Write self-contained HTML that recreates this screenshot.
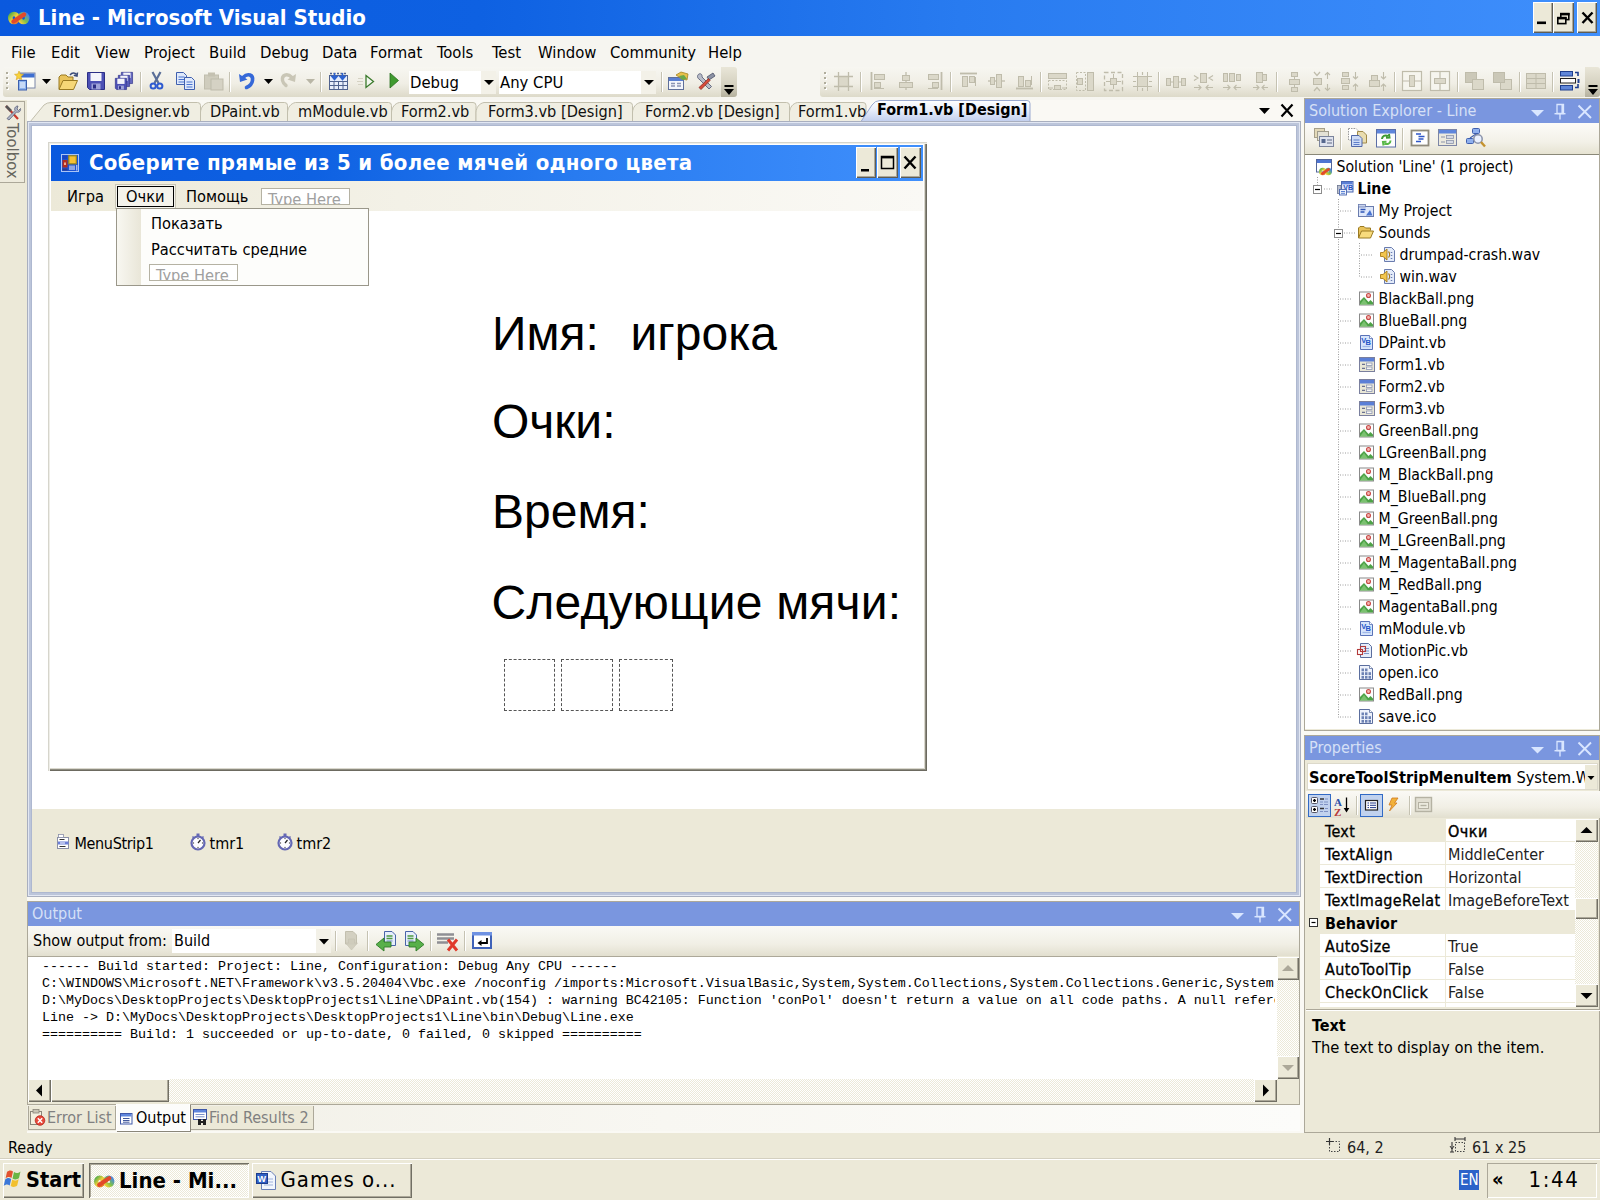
<!DOCTYPE html>
<html lang="en">
<head>
<meta charset="utf-8">
<title>Line - Microsoft Visual Studio</title>
<style>
html,body{margin:0;padding:0;}
body{width:1600px;height:1200px;overflow:hidden;background:#ece9d8;position:relative;
 font-family:"DejaVu Sans Condensed","DejaVu Sans","Liberation Sans",sans-serif;font-stretch:condensed;font-size:16px;color:#000;}
div,span{box-sizing:border-box;}
.a{position:absolute;white-space:nowrap;}
.t{position:absolute;white-space:nowrap;line-height:20px;height:20px;}
.b{font-weight:700;}
#ico{position:absolute;left:0;top:0;width:1600px;height:1200px;pointer-events:none;}
#titlebar{left:0;top:0;width:1600px;height:36px;background:linear-gradient(90deg,#0a59de 0%,#0e61e2 30%,#287bf0 60%,#3f8ffc 100%);}
#title{left:38px;top:3px;font-size:22px;font-weight:700;color:#fff;line-height:30px;}
.cbtn{position:absolute;background:#ece9d8;box-shadow:inset 1px 1px 0 #fff,inset -1px -1px 0 #5f5d53,inset -2px -2px 0 #aca899;}
#menubar{left:0;top:36px;width:1600px;height:30px;}
#menubar .t{top:6.5px;font-size:16.5px;}
.tb{position:absolute;height:30px;top:67px;border-radius:3px;background:linear-gradient(180deg,#f7f6f1 0%,#f0eee5 55%,#dddac9 100%);}
.sep{position:absolute;width:1px;background:#c5c2b2;box-shadow:1px 0 0 #fff;}
.combo{position:absolute;background:#fff;}
.cap{position:absolute;background:#7a96df;color:#d6e0f6;font-size:16px;line-height:22px;white-space:nowrap;}
.mono{font-family:"Liberation Mono",monospace;font-size:13.33px;font-stretch:normal;}
.raised{background:#ece9d8;box-shadow:inset 1px 1px 0 #fff,inset -1px -1px 0 #716f64,inset -2px -2px 0 #aca899;}
.sunken{box-shadow:inset 1px 1px 0 #aca899,inset -1px -1px 0 #fff;}
.dither{background-color:#ece9d8;background-image:linear-gradient(45deg,#fff 25%,transparent 25%,transparent 75%,#fff 75%),linear-gradient(45deg,#fff 25%,transparent 25%,transparent 75%,#fff 75%);background-size:2px 2px;background-position:0 0,1px 1px;}
</style>
</head>
<body>
<!-- TOP -->
<div style="position:absolute;left:27px;top:100px;width:1573px;height:1033px;background:#faf9f4;"></div>
<div style="position:absolute;left:0px;top:36px;width:1600px;height:64px;background:#f6f5f0;"></div>
<div class="a" id="titlebar"></div>
<div class="a" id="title">Line - Microsoft Visual Studio</div>
<div class="cbtn" style="position:absolute;left:1533px;top:2px;width:20px;height:31px;"></div>
<div class="cbtn" style="position:absolute;left:1553px;top:2px;width:21px;height:31px;"></div>
<div class="cbtn" style="position:absolute;left:1577px;top:2px;width:20px;height:31px;"></div>
<div class="a" id="menubar">
<span class="t" style="left:11px;top:6.5px;">File</span>
<span class="t" style="left:51px;top:6.5px;">Edit</span>
<span class="t" style="left:95px;top:6.5px;">View</span>
<span class="t" style="left:144px;top:6.5px;">Project</span>
<span class="t" style="left:209px;top:6.5px;">Build</span>
<span class="t" style="left:260px;top:6.5px;">Debug</span>
<span class="t" style="left:322px;top:6.5px;">Data</span>
<span class="t" style="left:370px;top:6.5px;">Format</span>
<span class="t" style="left:437px;top:6.5px;">Tools</span>
<span class="t" style="left:492px;top:6.5px;">Test</span>
<span class="t" style="left:538px;top:6.5px;">Window</span>
<span class="t" style="left:610px;top:6.5px;">Community</span>
<span class="t" style="left:708px;top:6.5px;">Help</span>
</div>
<div class="tb" style="left:3px;width:719px"></div>
<div style="position:absolute;left:721px;top:67px;width:16px;height:30px;background:linear-gradient(180deg,#e9e6d8 0%,#d4d0bf 60%,#b5b19e 100%);border-radius:0 3px 3px 0;"></div>
<div class="tb" style="left:820px;width:766px"></div>
<div style="position:absolute;left:1585px;top:67px;width:15px;height:30px;background:linear-gradient(180deg,#e9e6d8 0%,#d4d0bf 60%,#b5b19e 100%);border-radius:0 3px 3px 0;"></div>
<div style="position:absolute;left:6px;top:72px;width:2px;height:2px;background:#b0ad9c;box-shadow:1px 1px 0 #fff;"></div>
<div style="position:absolute;left:6px;top:77px;width:2px;height:2px;background:#b0ad9c;box-shadow:1px 1px 0 #fff;"></div>
<div style="position:absolute;left:6px;top:82px;width:2px;height:2px;background:#b0ad9c;box-shadow:1px 1px 0 #fff;"></div>
<div style="position:absolute;left:6px;top:87px;width:2px;height:2px;background:#b0ad9c;box-shadow:1px 1px 0 #fff;"></div>
<div style="position:absolute;left:824px;top:72px;width:2px;height:2px;background:#b0ad9c;box-shadow:1px 1px 0 #fff;"></div>
<div style="position:absolute;left:824px;top:77px;width:2px;height:2px;background:#b0ad9c;box-shadow:1px 1px 0 #fff;"></div>
<div style="position:absolute;left:824px;top:82px;width:2px;height:2px;background:#b0ad9c;box-shadow:1px 1px 0 #fff;"></div>
<div style="position:absolute;left:824px;top:87px;width:2px;height:2px;background:#b0ad9c;box-shadow:1px 1px 0 #fff;"></div>
<div class="sep" style="position:absolute;left:140px;top:72px;width:1px;height:20px;"></div>
<div class="sep" style="position:absolute;left:229px;top:72px;width:1px;height:20px;"></div>
<div class="sep" style="position:absolute;left:320px;top:72px;width:1px;height:20px;"></div>
<div class="sep" style="position:absolute;left:661px;top:72px;width:1px;height:20px;"></div>
<div class="combo" style="position:absolute;left:409px;top:71px;width:72px;height:23px;"></div>
<div style="position:absolute;left:481px;top:71px;width:15px;height:23px;background:#f3f1e8;"></div>
<span class="t" style="left:410px;top:73px;font-size:16.5px;">Debug</span>
<div class="combo" style="position:absolute;left:499px;top:71px;width:142px;height:23px;"></div>
<div style="position:absolute;left:641px;top:71px;width:15px;height:23px;background:#f3f1e8;"></div>
<span class="t" style="left:500px;top:73px;font-size:16.5px;">Any CPU</span>
<div class="sep" style="position:absolute;left:860px;top:72px;width:1px;height:20px;"></div>
<div class="sep" style="position:absolute;left:950px;top:72px;width:1px;height:20px;"></div>
<div class="sep" style="position:absolute;left:1040px;top:72px;width:1px;height:20px;"></div>
<div class="sep" style="position:absolute;left:1158px;top:72px;width:1px;height:20px;"></div>
<div class="sep" style="position:absolute;left:1276px;top:72px;width:1px;height:20px;"></div>
<div class="sep" style="position:absolute;left:1394px;top:72px;width:1px;height:20px;"></div>
<div class="sep" style="position:absolute;left:1457px;top:72px;width:1px;height:20px;"></div>
<div class="sep" style="position:absolute;left:1519px;top:72px;width:1px;height:20px;"></div>
<div class="sep" style="position:absolute;left:1552px;top:72px;width:1px;height:20px;"></div>
<!-- TABS -->
<div style="position:absolute;left:0px;top:101px;width:25px;height:82px;background:#eeebdd;border:1px solid #aca899;border-left:none;"></div>
<span class="a" style="left:21.5px;top:123px;transform-origin:0 0;transform:rotate(90deg);color:#66665e;font-size:16.6px;line-height:20px;">Toolbox</span>
<svg class="a" style="left:0;top:96px" width="1300" height="30"><path d="M30,26 L44,9 Q47,6.5 51,6.5 L197.5,6.5 Q200.5,6.5 200.5,9.5 L200.5,26 Z" fill="#f0eee2" stroke="#c2bfad" stroke-width="1"/><path d="M200.5,26 L200.5,16 C201.0,11.5 203.5,7.5 208.5,6.5 L284.5,6.5 Q287.5,6.5 287.5,9.5 L287.5,26 Z" fill="#f0eee2" stroke="#c2bfad" stroke-width="1"/><path d="M287.5,26 L287.5,16 C288.0,11.5 290.5,7.5 295.5,6.5 L388.5,6.5 Q391.5,6.5 391.5,9.5 L391.5,26 Z" fill="#f0eee2" stroke="#c2bfad" stroke-width="1"/><path d="M391.5,26 L391.5,16 C392.0,11.5 394.5,7.5 399.5,6.5 L473,6.5 Q476,6.5 476,9.5 L476,26 Z" fill="#f0eee2" stroke="#c2bfad" stroke-width="1"/><path d="M476,26 L476,16 C476.5,11.5 479,7.5 484,6.5 L629.5,6.5 Q632.5,6.5 632.5,9.5 L632.5,26 Z" fill="#f0eee2" stroke="#c2bfad" stroke-width="1"/><path d="M632.5,26 L632.5,16 C633.0,11.5 635.5,7.5 640.5,6.5 L786.5,6.5 Q789.5,6.5 789.5,9.5 L789.5,26 Z" fill="#f0eee2" stroke="#c2bfad" stroke-width="1"/><path d="M789.5,26 L789.5,16 C790.0,11.5 792.5,7.5 797.5,6.5 L863,6.5 Q866,6.5 866,9.5 L866,26 Z" fill="#f0eee2" stroke="#c2bfad" stroke-width="1"/><defs><linearGradient id="atg" x1="0" y1="0" x2="0" y2="1"><stop offset="0" stop-color="#ffffff"/><stop offset="0.45" stop-color="#e6ecfa"/><stop offset="1" stop-color="#bccaec"/></linearGradient></defs><path d="M860,27 L872,9 Q875,4.500 880,4.500 L1027,4.500 Q1030,4.500 1030,7.500 L1030,27 Z" fill="url(#atg)" stroke="#9aa9cf" stroke-width="1"/></svg>
<span class="t" style="left:53px;top:102px;font-size:16.2px;color:#111;">Form1.Designer.vb</span>
<span class="t" style="left:210px;top:102px;font-size:16.2px;color:#111;">DPaint.vb</span>
<span class="t" style="left:298px;top:102px;font-size:16.2px;color:#111;">mModule.vb</span>
<span class="t" style="left:401px;top:102px;font-size:16.2px;color:#111;">Form2.vb</span>
<span class="t" style="left:488px;top:102px;font-size:16.2px;color:#111;">Form3.vb [Design]</span>
<span class="t" style="left:645px;top:102px;font-size:16.2px;color:#111;">Form2.vb [Design]</span>
<span class="t" style="left:798px;top:102px;font-size:16.2px;color:#111;">Form1.vb</span>
<span class="t" style="left:877px;top:100px;font-weight:700;font-size:16px;">Form1.vb [Design]</span>
<!-- DOC -->
<div style="position:absolute;left:27px;top:121px;width:1274px;height:776px;background:#fff;border:1px solid #a9afbf;box-shadow:inset 0 0 0 1px #e2e7f3,inset 0 0 0 3px #bcc5da,inset 0 0 0 4px #aeb8d0;"></div>
<div style="position:absolute;left:32px;top:809px;width:1264px;height:83px;background:#ece9d8;"></div>
<div style="position:absolute;left:48px;top:142px;width:879px;height:629px;background:#fff;box-shadow:inset 1px 1px 0 #d6d5cc,inset 2px 2px 0 #efeee8,inset -1px -1px 0 #6c6a60,inset -2px -2px 0 #8e8c80,inset -3px -3px 0 #dad8ce;"></div>
<div style="position:absolute;left:51px;top:145px;width:872px;height:36px;background:linear-gradient(90deg,#0a59de 0%,#0e61e2 30%,#287bf0 60%,#3f8ffc 100%);"></div>
<span class="t" style="left:89px;top:149px;font-size:22px;font-weight:700;color:#fff;line-height:28px;height:28px;letter-spacing:0.3px;">Соберите прямые из 5 и более мячей одного цвета</span>
<div class="cbtn" style="position:absolute;left:856px;top:147px;width:20px;height:31px;"></div>
<div class="cbtn" style="position:absolute;left:877px;top:147px;width:21px;height:31px;"></div>
<div class="cbtn" style="position:absolute;left:900px;top:147px;width:21px;height:31px;"></div>
<div style="position:absolute;left:51px;top:181px;width:872px;height:30px;background:linear-gradient(90deg,#ece9d8 0%,#f3f1e7 40%,#faf9f5 100%);"></div>
<span class="t" style="left:67px;top:187px;font-size:16.3px;">Игра</span>
<div style="position:absolute;left:117px;top:186px;width:57px;height:21px;background:#f4f3ec;border:1px solid #000;box-shadow:0 0 0 1px #f4f3ec,0 0 0 2px #c9c6b6;"></div>
<span class="t" style="left:126px;top:187px;font-size:16.3px;">Очки</span>
<span class="t" style="left:186px;top:187px;font-size:16.3px;">Помощь</span>
<div style="position:absolute;left:261px;top:188px;width:89px;height:17px;background:#fff;border:1px solid #b5b2a3;overflow:hidden;"><span class="t" style="left:6px;top:1px;color:#a0a0a0;font-size:16.3px;">Type Here</span></div>
<div style="position:absolute;left:115.5px;top:208px;width:253.5px;height:78px;background:#fdfdfb;border:1px solid #9a978a;"></div>
<div style="position:absolute;left:117px;top:209px;width:24px;height:76px;background:linear-gradient(90deg,#f8f7f1,#e9e6d8);"></div>
<span class="t" style="left:151px;top:214px;font-size:16.3px;">Показать</span>
<span class="t" style="left:151px;top:240px;font-size:16.3px;">Рассчитать средние</span>
<div style="position:absolute;left:149px;top:264px;width:89px;height:17px;background:#fff;border:1px solid #b5b2a3;overflow:hidden;"><span class="t" style="left:6px;top:1px;color:#a0a0a0;font-size:16.3px;">Type Here</span></div>
<span class="t" style="left:492px;top:306px;font-family:'Liberation Sans',sans-serif;font-stretch:normal;font-size:48px;line-height:56px;height:56px;">Имя:</span>
<span class="t" style="left:630.5px;top:306px;font-family:'Liberation Sans',sans-serif;font-stretch:normal;font-size:48px;line-height:56px;height:56px;">игрока</span>
<span class="t" style="left:492px;top:394px;font-family:'Liberation Sans',sans-serif;font-stretch:normal;font-size:48px;line-height:56px;height:56px;">Очки:</span>
<span class="t" style="left:492px;top:484px;font-family:'Liberation Sans',sans-serif;font-stretch:normal;font-size:48px;line-height:56px;height:56px;">Время:</span>
<span class="t" style="left:491.5px;top:575px;font-family:'Liberation Sans',sans-serif;font-stretch:normal;font-size:48px;line-height:56px;height:56px;letter-spacing:0.2px;">Следующие мячи:</span>
<div style="position:absolute;left:504px;top:659px;width:51px;height:52px;border:1px dashed #555;"></div>
<div style="position:absolute;left:561px;top:659px;width:52px;height:52px;border:1px dashed #555;"></div>
<div style="position:absolute;left:619px;top:659px;width:54px;height:52px;border:1px dashed #555;"></div>
<span class="t" style="left:74.5px;top:833.5px;font-size:16px;letter-spacing:-0.35px;">MenuStrip1</span>
<span class="t" style="left:209.5px;top:833.5px;font-size:16px;">tmr1</span>
<span class="t" style="left:296.5px;top:833.5px;font-size:16px;">tmr2</span>
<!-- RIGHT -->
<div style="position:absolute;left:1304px;top:98px;width:296px;height:633px;border:1px solid #aca899;background:#ece9d8;"></div>
<div class="cap" style="position:absolute;left:1305px;top:99px;width:294px;height:24px;"><span class="a" style="left:4px;top:1px;">Solution Explorer - Line</span></div>
<div style="position:absolute;left:1305px;top:123px;width:294px;height:31px;background:linear-gradient(180deg,#fcfbf8 0%,#f3f1e8 60%,#e6e3d2 100%);"></div>
<div style="position:absolute;left:1305px;top:154px;width:294px;height:575px;background:#fff;border-top:1px solid #8a8878;"></div>
<div class="sep" style="position:absolute;left:1340px;top:128px;width:1px;height:22px;"></div>
<div class="sep" style="position:absolute;left:1402px;top:128px;width:1px;height:22px;"></div>
<span class="t" style="left:1336.5px;top:157.0px;font-size:15.7px;">Solution 'Line' (1 project)</span>
<span class="t" style="left:1357.5px;top:179.0px;font-weight:700;font-size:15.7px;">Line</span>
<span class="t" style="left:1378.5px;top:201.0px;font-size:15.7px;">My Project</span>
<span class="t" style="left:1378.5px;top:223.0px;font-size:15.7px;">Sounds</span>
<span class="t" style="left:1399.5px;top:245.0px;font-size:15.7px;">drumpad-crash.wav</span>
<span class="t" style="left:1399.5px;top:267.0px;font-size:15.7px;">win.wav</span>
<span class="t" style="left:1378.5px;top:289.0px;font-size:15.7px;">BlackBall.png</span>
<span class="t" style="left:1378.5px;top:311.0px;font-size:15.7px;">BlueBall.png</span>
<span class="t" style="left:1378.5px;top:333.0px;font-size:15.7px;">DPaint.vb</span>
<span class="t" style="left:1378.5px;top:355.0px;font-size:15.7px;">Form1.vb</span>
<span class="t" style="left:1378.5px;top:377.0px;font-size:15.7px;">Form2.vb</span>
<span class="t" style="left:1378.5px;top:399.0px;font-size:15.7px;">Form3.vb</span>
<span class="t" style="left:1378.5px;top:421.0px;font-size:15.7px;">GreenBall.png</span>
<span class="t" style="left:1378.5px;top:443.0px;font-size:15.7px;">LGreenBall.png</span>
<span class="t" style="left:1378.5px;top:465.0px;font-size:15.7px;">M_BlackBall.png</span>
<span class="t" style="left:1378.5px;top:487.0px;font-size:15.7px;">M_BlueBall.png</span>
<span class="t" style="left:1378.5px;top:509.0px;font-size:15.7px;">M_GreenBall.png</span>
<span class="t" style="left:1378.5px;top:531.0px;font-size:15.7px;">M_LGreenBall.png</span>
<span class="t" style="left:1378.5px;top:553.0px;font-size:15.7px;">M_MagentaBall.png</span>
<span class="t" style="left:1378.5px;top:575.0px;font-size:15.7px;">M_RedBall.png</span>
<span class="t" style="left:1378.5px;top:597.0px;font-size:15.7px;">MagentaBall.png</span>
<span class="t" style="left:1378.5px;top:619.0px;font-size:15.7px;">mModule.vb</span>
<span class="t" style="left:1378.5px;top:641.0px;font-size:15.7px;">MotionPic.vb</span>
<span class="t" style="left:1378.5px;top:663.0px;font-size:15.7px;">open.ico</span>
<span class="t" style="left:1378.5px;top:685.0px;font-size:15.7px;">RedBall.png</span>
<span class="t" style="left:1378.5px;top:707.0px;font-size:15.7px;">save.ico</span>
<div style="position:absolute;left:1304px;top:735px;width:296px;height:398px;border:1px solid #aca899;background:#ece9d8;"></div>
<div class="cap" style="position:absolute;left:1305px;top:736px;width:294px;height:24px;"><span class="a" style="left:4px;top:1px;">Properties</span></div>
<div style="position:absolute;left:1307px;top:763px;width:291px;height:27px;background:#fff;border:1px solid #dcd9cb;"></div>
<div style="position:absolute;left:1585px;top:765px;width:12px;height:24px;background:#ece9d8;"></div>
<div style="position:absolute;left:1309px;top:765px;width:276px;height:24px;overflow:hidden;"><span class="t" style="left:0px;top:3px;font-size:16.3px;"><b>ScoreToolStripMenuItem</b> System.Windows.Forms</span></div>
<div style="position:absolute;left:1306px;top:791px;width:294px;height:27px;background:linear-gradient(180deg,#faf9f5 0%,#f1efe5 60%,#e2dfcf 100%);"></div>
<div style="position:absolute;left:1308px;top:794px;width:23px;height:23px;background:#c1d2ee;border:1px solid #316ac5;"></div>
<div style="position:absolute;left:1360px;top:794px;width:23px;height:23px;background:#c1d2ee;border:1px solid #316ac5;"></div>
<div class="sep" style="position:absolute;left:1356px;top:796px;width:1px;height:19px;"></div>
<div class="sep" style="position:absolute;left:1409px;top:796px;width:1px;height:19px;"></div>
<div style="position:absolute;left:1308px;top:819px;width:267px;height:188px;background:#ece9d8;"></div>
<div style="position:absolute;left:1320px;top:1003px;width:125px;height:4px;background:#fff;"></div>
<div style="position:absolute;left:1446px;top:1003px;width:129px;height:4px;background:#fff;"></div>
<div style="position:absolute;left:1446px;top:819px;width:129px;height:22px;background:#fff;"></div>
<div style="position:absolute;left:1320px;top:819px;width:126px;height:22px;overflow:hidden;"><span class="t" style="left:5px;top:3px;font-size:16px;letter-spacing:0.35px;-webkit-text-stroke:0.3px #000;">Text</span></div>
<div style="position:absolute;left:1446px;top:819px;width:129px;height:22px;overflow:hidden;"><span class="t" style="left:2px;top:2.5px;font-size:16px;color:#222;color:#000;letter-spacing:0.5px;-webkit-text-stroke:0.4px #000;">Очки</span></div>
<div style="position:absolute;left:1320px;top:842px;width:125px;height:22px;background:#fff;"></div>
<div style="position:absolute;left:1446px;top:842px;width:129px;height:22px;background:#fff;"></div>
<div style="position:absolute;left:1320px;top:842px;width:126px;height:22px;overflow:hidden;"><span class="t" style="left:5px;top:3px;font-size:16px;letter-spacing:0.35px;-webkit-text-stroke:0.3px #000;">TextAlign</span></div>
<div style="position:absolute;left:1446px;top:842px;width:129px;height:22px;overflow:hidden;"><span class="t" style="left:2px;top:2.5px;font-size:16px;color:#222;">MiddleCenter</span></div>
<div style="position:absolute;left:1320px;top:865px;width:125px;height:22px;background:#fff;"></div>
<div style="position:absolute;left:1446px;top:865px;width:129px;height:22px;background:#fff;"></div>
<div style="position:absolute;left:1320px;top:865px;width:126px;height:22px;overflow:hidden;"><span class="t" style="left:5px;top:3px;font-size:16px;letter-spacing:0.35px;-webkit-text-stroke:0.3px #000;">TextDirection</span></div>
<div style="position:absolute;left:1446px;top:865px;width:129px;height:22px;overflow:hidden;"><span class="t" style="left:2px;top:2.5px;font-size:16px;color:#222;">Horizontal</span></div>
<div style="position:absolute;left:1320px;top:888px;width:125px;height:22px;background:#fff;"></div>
<div style="position:absolute;left:1446px;top:888px;width:129px;height:22px;background:#fff;"></div>
<div style="position:absolute;left:1320px;top:888px;width:126px;height:22px;overflow:hidden;"><span class="t" style="left:5px;top:3px;font-size:16px;letter-spacing:0.35px;-webkit-text-stroke:0.3px #000;">TextImageRelat</span></div>
<div style="position:absolute;left:1446px;top:888px;width:129px;height:22px;overflow:hidden;"><span class="t" style="left:2px;top:2.5px;font-size:16px;color:#222;">ImageBeforeText</span></div>
<span class="t" style="left:1325px;top:914px;font-weight:700;font-size:16px;">Behavior</span>
<div style="position:absolute;left:1320px;top:934px;width:125px;height:22px;background:#fff;"></div>
<div style="position:absolute;left:1446px;top:934px;width:129px;height:22px;background:#fff;"></div>
<div style="position:absolute;left:1320px;top:934px;width:126px;height:22px;overflow:hidden;"><span class="t" style="left:5px;top:3px;font-size:16px;letter-spacing:0.35px;-webkit-text-stroke:0.3px #000;">AutoSize</span></div>
<div style="position:absolute;left:1446px;top:934px;width:129px;height:22px;overflow:hidden;"><span class="t" style="left:2px;top:2.5px;font-size:16px;color:#222;">True</span></div>
<div style="position:absolute;left:1320px;top:957px;width:125px;height:22px;background:#fff;"></div>
<div style="position:absolute;left:1446px;top:957px;width:129px;height:22px;background:#fff;"></div>
<div style="position:absolute;left:1320px;top:957px;width:126px;height:22px;overflow:hidden;"><span class="t" style="left:5px;top:3px;font-size:16px;letter-spacing:0.35px;-webkit-text-stroke:0.3px #000;">AutoToolTip</span></div>
<div style="position:absolute;left:1446px;top:957px;width:129px;height:22px;overflow:hidden;"><span class="t" style="left:2px;top:2.5px;font-size:16px;color:#222;">False</span></div>
<div style="position:absolute;left:1320px;top:980px;width:125px;height:22px;background:#fff;"></div>
<div style="position:absolute;left:1446px;top:980px;width:129px;height:22px;background:#fff;"></div>
<div style="position:absolute;left:1320px;top:980px;width:126px;height:22px;overflow:hidden;"><span class="t" style="left:5px;top:3px;font-size:16px;letter-spacing:0.35px;-webkit-text-stroke:0.3px #000;">CheckOnClick</span></div>
<div style="position:absolute;left:1446px;top:980px;width:129px;height:22px;overflow:hidden;"><span class="t" style="left:2px;top:2.5px;font-size:16px;color:#222;">False</span></div>
<div class="dither" style="position:absolute;left:1575px;top:819px;width:23px;height:188px;"></div>
<div class="raised" style="position:absolute;left:1575px;top:819px;width:23px;height:23px;"></div>
<div class="raised" style="position:absolute;left:1575px;top:984px;width:23px;height:23px;"></div>
<div class="raised" style="position:absolute;left:1575px;top:898px;width:23px;height:21px;"></div>
<div style="position:absolute;left:1306px;top:1009px;width:294px;height:1px;background:#aca899;box-shadow:0 1px 0 #fff;"></div>
<span class="t" style="left:1312px;top:1016px;font-weight:700;font-size:16px;">Text</span>
<span class="t" style="left:1312px;top:1038px;font-size:16.4px;">The text to display on the item.</span>
<!-- BOTTOM -->
<div style="position:absolute;left:27px;top:901px;width:1273px;height:204px;border:1px solid #aca899;background:#ece9d8;"></div>
<div class="cap" style="position:absolute;left:28px;top:902px;width:1271px;height:24px;"><span class="a" style="left:4px;top:1px;">Output</span></div>
<div style="position:absolute;left:28px;top:926px;width:1271px;height:30px;background:linear-gradient(180deg,#faf9f5 0%,#f1efe5 60%,#e2dfcf 100%);"></div>
<span class="t" style="left:33px;top:931px;font-size:16px;">Show output from:</span>
<div style="position:absolute;left:172px;top:929px;width:144px;height:24px;background:#fff;"></div>
<div style="position:absolute;left:316px;top:929px;width:15px;height:24px;background:#f3f1e8;"></div>
<span class="t" style="left:174px;top:931px;font-size:16px;">Build</span>
<div class="sep" style="position:absolute;left:335px;top:931px;width:1px;height:20px;"></div>
<div class="sep" style="position:absolute;left:367px;top:931px;width:1px;height:20px;"></div>
<div class="sep" style="position:absolute;left:430px;top:931px;width:1px;height:20px;"></div>
<div class="sep" style="position:absolute;left:464px;top:931px;width:1px;height:20px;"></div>
<div style="position:absolute;left:28px;top:956px;width:1249px;height:123px;background:#fff;border-top:1px solid #aca899;overflow:hidden;"></div>
<div style="position:absolute;left:28px;top:957px;width:1247px;height:122px;overflow:hidden;"><span class="t mono" style="left:14px;top:1px;line-height:17px;height:17px;">------ Build started: Project: Line, Configuration: Debug Any CPU ------</span>
<span class="t mono" style="left:14px;top:18px;line-height:17px;height:17px;">C:\WINDOWS\Microsoft.NET\Framework\v3.5.20404\Vbc.exe /noconfig /imports:Microsoft.VisualBasic,System,System.Collections,System.Collections.Generic,System.Data,System.Diagnostics</span>
<span class="t mono" style="left:14px;top:35px;line-height:17px;height:17px;">D:\MyDocs\DesktopProjects\DesktopProjects1\Line\DPaint.vb(154) : warning BC42105: Function 'conPol' doesn't return a value on all code paths. A null reference exception could occur</span>
<span class="t mono" style="left:14px;top:52px;line-height:17px;height:17px;">Line -&gt; D:\MyDocs\DesktopProjects\DesktopProjects1\Line\bin\Debug\Line.exe</span>
<span class="t mono" style="left:14px;top:69px;line-height:17px;height:17px;">========== Build: 1 succeeded or up-to-date, 0 failed, 0 skipped ==========</span>
</div>
<div class="dither" style="position:absolute;left:1277px;top:957px;width:22px;height:122px;"></div>
<div class="raised" style="position:absolute;left:1277px;top:957px;width:22px;height:23px;"></div>
<div class="raised" style="position:absolute;left:1277px;top:1056px;width:22px;height:23px;"></div>
<div class="dither" style="position:absolute;left:28px;top:1079px;width:1249px;height:23px;"></div>
<div class="raised" style="position:absolute;left:28px;top:1079px;width:23px;height:23px;"></div>
<div class="raised" style="position:absolute;left:51px;top:1079px;width:118px;height:23px;"></div>
<div class="raised" style="position:absolute;left:1254px;top:1079px;width:23px;height:23px;"></div>
<div style="position:absolute;left:1277px;top:1079px;width:22px;height:23px;background:#ece9d8;"></div>
<div style="position:absolute;left:27px;top:1105px;width:1273px;height:26px;background:linear-gradient(90deg,#f0eee4 0%,#f8f7f2 50%,#fcfcfa 100%);"></div>
<div style="position:absolute;left:28px;top:1106px;width:88px;height:24px;background:#ece9d8;border:1px solid #aca899;border-top:none;"></div>
<div style="position:absolute;left:190px;top:1106px;width:124px;height:24px;background:#ece9d8;border:1px solid #aca899;border-top:none;"></div>
<div style="position:absolute;left:116px;top:1104px;width:74px;height:27px;background:#fcfcfa;border:1px solid #fff;border-top:none;box-shadow:1px 1px 0 #8a867a;"></div>
<span class="t" style="left:47px;top:1108px;font-size:16px;color:#808080;">Error List</span>
<span class="t" style="left:136px;top:1108px;font-size:16px;">Output</span>
<span class="t" style="left:209px;top:1108px;font-size:16px;color:#808080;">Find Results 2</span>
<span class="t" style="left:8px;top:1138px;font-size:16px;">Ready</span>
<span class="t" style="left:1347px;top:1138px;font-size:16px;color:#222;">64, 2</span>
<span class="t" style="left:1472px;top:1138px;font-size:16px;color:#222;">61 x 25</span>
<div style="position:absolute;left:0px;top:1159px;width:1600px;height:41px;background:#ece9d8;border-top:1px solid #fff;box-shadow:0 -1px 0 #d4d0c0;"></div>
<div class="raised" style="position:absolute;left:3px;top:1163px;width:81px;height:35px;"></div>
<span class="t" style="left:26px;top:1165px;font-size:21.5px;font-weight:700;line-height:30px;height:30px;">Start</span>
<div class="dither" style="position:absolute;left:89px;top:1163px;width:160px;height:35px;box-shadow:inset 1px 1px 0 #716f64,inset -1px -1px 0 #fff,inset 2px 2px 0 #aca899;"></div>
<span class="t" style="left:119px;top:1166px;font-size:22px;font-weight:700;line-height:30px;height:30px;">Line - Mi...</span>
<div class="raised" style="position:absolute;left:252px;top:1163px;width:160px;height:35px;"></div>
<span class="t" style="left:280.5px;top:1165px;font-size:22px;letter-spacing:1px;line-height:30px;height:30px;">Games o...</span>
<div style="position:absolute;left:1459px;top:1170px;width:20px;height:20px;background:#2c62c9;"></div>
<span class="t" style="left:1460px;top:1170px;font-size:15px;color:#fff;">EN</span>
<div class="sunken" style="position:absolute;left:1487px;top:1163px;width:110px;height:35px;"></div>
<span class="t" style="left:1492px;top:1165px;font-size:20px;font-weight:700;line-height:28px;height:28px;">«</span>
<span class="t" style="left:1528.5px;top:1165px;font-size:22px;letter-spacing:1.6px;line-height:30px;height:30px;">1:44</span>
<!-- ICONS -->
<svg id="ico" viewBox="0 0 1600 1200">
<defs><linearGradient id="vl1" x1="0" y1="0" x2="1" y2="1"><stop offset="0" stop-color="#5fb04a"/><stop offset="0.5" stop-color="#f0d03a"/><stop offset="1" stop-color="#e8782a"/></linearGradient><linearGradient id="vl2" x1="1" y1="0" x2="0" y2="1"><stop offset="0" stop-color="#4a86e0"/><stop offset="0.55" stop-color="#7cc04a"/><stop offset="1" stop-color="#f0d03a"/></linearGradient></defs>
<g transform="translate(8,8) scale(1.0)"><ellipse cx="6" cy="10" rx="3.700" ry="4" fill="none" stroke="url(#vl1)" stroke-width="4.600"/><ellipse cx="15.500" cy="10" rx="3.700" ry="4" fill="none" stroke="url(#vl2)" stroke-width="4.600"/><path d="M5.500,13.500 L16,6.500" stroke="#e2492a" stroke-width="4.400" stroke-linecap="round"/></g>
<rect x="1537" y="21.500" width="9" height="2.600" fill="#000"/><g fill="none" stroke="#000" stroke-width="1.600"><rect x="1560.800" y="13.600" width="8" height="6"/><path d="M1560,14.200 h9.600" stroke-width="2.400"/><rect x="1557.800" y="17.600" width="8" height="6" fill="#ece9d8"/><path d="M1557,18.200 h9.600" stroke-width="2.400"/></g><path d="M1582.500,12.500 l10,10.500 M1592.500,12.500 l-10,10.500" stroke="#000" stroke-width="2.400" fill="none"/>
<g transform="translate(15,71)" ><rect x="5" y="2" width="15" height="15" fill="#fdfdf8" stroke="#7b86a8"/><rect x="5.500" y="2.500" width="14" height="4" fill="#3f6fd0"/><rect x="7" y="8" width="5" height="8" fill="#d9dff0"/><path d="M4,0 L5.200,3 L8.500,3.300 L6,5.500 L6.800,8.800 L4,7 L1.200,8.800 L2,5.500 L-0.500,3.300 L2.800,3 Z" fill="#f7d23a" stroke="#d8a520" stroke-width="0.600"/><rect x="3.500" y="9.500" width="8" height="9.500" fill="#8eb4ee" stroke="#3b5fae"/><path d="M5,12 h5 M5,14 h5 M5,16 h5" stroke="#fff" stroke-width="1"/></g>
<path d="M42,79 h9 l-4.5,5 Z" fill="#000"/>
<g transform="translate(58,72)" ><path d="M1,17 L1,5 L3,3 L8,3 L10,5 L15,5 L15,8" fill="#e9c35a" stroke="#9a7a22"/><path d="M1,17.500 L5,8.500 L19.500,8.500 L15.500,17.500 Z" fill="#f6d777" stroke="#9a7a22"/><path d="M12,3 C14,0.500 17,0.500 18.500,2.500 M19.500,0.500 L19,4 L15.800,3.200" fill="none" stroke="#3a4a78" stroke-width="1.500"/></g>
<g transform="translate(87,72)" ><path d="M0.500,0.500 H17.500 V17.500 H2.500 L0.500,15.500 Z" fill="#4c50b4" stroke="#2c2f86"/><rect x="3.500" y="1" width="11" height="8" fill="#f4f4fa"/><rect x="4.500" y="11.500" width="9" height="6" fill="#9fa3d8"/><rect x="6" y="12.500" width="3" height="4" fill="#2c2f86"/></g>
<g transform="translate(115,72)" ><g transform="translate(6,0) scale(0.66)"><path d="M0.500,0.500 H17.500 V17.500 H2.500 L0.500,15.500 Z" fill="#6669c0" stroke="#2c2f86"/><rect x="3.500" y="1" width="11" height="8" fill="#f4f4fa"/><rect x="4.500" y="11.500" width="9" height="6" fill="#9fa3d8"/><rect x="6" y="12.500" width="3" height="4" fill="#2c2f86"/></g><g transform="translate(3,3) scale(0.66)"><path d="M0.500,0.500 H17.500 V17.500 H2.500 L0.500,15.500 Z" fill="#585cba" stroke="#2c2f86"/><rect x="3.500" y="1" width="11" height="8" fill="#f4f4fa"/><rect x="4.500" y="11.500" width="9" height="6" fill="#9fa3d8"/><rect x="6" y="12.500" width="3" height="4" fill="#2c2f86"/></g><g transform="translate(0,6) scale(0.66)"><path d="M0.500,0.500 H17.500 V17.500 H2.500 L0.500,15.500 Z" fill="#4c50b4" stroke="#2c2f86"/><rect x="3.500" y="1" width="11" height="8" fill="#f4f4fa"/><rect x="4.500" y="11.500" width="9" height="6" fill="#9fa3d8"/><rect x="6" y="12.500" width="3" height="4" fill="#2c2f86"/></g></g>
<g transform="translate(150,72)" ><path d="M2.500,0 L8.500,11 M10.500,0 L4.500,11" stroke="#5a6e98" stroke-width="2.200" fill="none"/><circle cx="3.200" cy="14" r="2.600" fill="none" stroke="#2f5bd0" stroke-width="2"/><circle cx="9.800" cy="14" r="2.600" fill="none" stroke="#2f5bd0" stroke-width="2"/></g>
<g transform="translate(176,72)" ><path d="M0.500,0.500 H7.5 L10.5,3.500 V12.5 H0.500 Z" fill="#dfe9fb" stroke="#3f5fae"/><path d="M2.500,5 h6 M2.500,7.500 h6 M2.500,10 h6" stroke="#4a74d0" stroke-width="1.200"/><g transform="translate(8,5)"><path d="M0.500,0.500 H7.5 L10.5,3.500 V12.5 H0.500 Z" fill="#dfe9fb" stroke="#3f5fae"/><path d="M2.500,5 h6 M2.500,7.500 h6 M2.500,10 h6" stroke="#4a74d0" stroke-width="1.200"/></g></g>
<g transform="translate(204,72)" ><rect x="0.500" y="3" width="14" height="14" fill="#cfccbd" stroke="#c0bdad"/><rect x="4" y="0.500" width="7" height="4" fill="#c4c1b1"/><rect x="7" y="7" width="12" height="11" fill="#d5d2c4" stroke="#bebbab"/></g>
<g transform="translate(239,72)" ><path d="M4,5.500 C9,0.500 14.500,3 13.500,8.500 C13,12 10,14.500 7.500,15.500" fill="none" stroke="#3568d8" stroke-width="3.600" stroke-linecap="round"/><path d="M0,2 L1,10 L8.500,7.500 Z" fill="#3568d8"/></g>
<path d="M264,79 h9 l-4.5,5 Z" fill="#000"/>
<g transform="translate(280,72)" ><path d="M12,5.500 C7,0.500 1.500,3 2.500,8.500 C3,11 4.500,12.500 6,13.500" fill="none" stroke="#c9c6b6" stroke-width="3.400" stroke-linecap="round"/><path d="M16,2 L15,10 L7.500,7.500 Z" fill="#c9c6b6"/></g>
<path d="M306,79 h9 l-4.5,5 Z" fill="#b9b6a6"/>
<g transform="translate(329,72)" ><rect x="0.500" y="3.500" width="18" height="14" fill="#e8eefb" stroke="#50628e"/><path d="M1,9.500 h17 M1,13.500 h17 M5,9 v8 M9.500,9 v8 M14,9 v8" stroke="#50628e" stroke-width="1"/><path d="M1,1.500 h17" stroke="#50628e" stroke-width="1.500" stroke-dasharray="2,1.500"/><path d="M5.500,1 v5 M3,4.500 l2.500,3 l2.500,-3 Z M13.500,1 v5 M11,4.500 l2.500,3 l2.500,-3 Z" stroke="#2d62cf" stroke-width="1.600" fill="#2d62cf"/></g>
<g transform="translate(357,75)" ><path d="M9,0.500 L16.500,6.500 L9,12.500 Z" fill="#f2f7ee" stroke="#3a7a2c" stroke-width="1.300"/><path d="M1,3.500 h5 M0,6.500 h6 M1,9.500 h5" stroke="#d5d2c3" stroke-width="1.200"/></g>
<g transform="translate(390,73)" ><path d="M0,0 L8.500,7.500 L0,15 Z" fill="#3f9a2f" stroke="#2a6e20" stroke-width="0.800"/></g>
<path d="M484,80 h10 l-5.0,5 Z" fill="#000"/>
<path d="M644,80 h10 l-5.0,5 Z" fill="#000"/>
<g transform="translate(668,72)" ><rect x="0.500" y="5.500" width="15" height="12" fill="#f4f6fc" stroke="#5f6f9a"/><rect x="1" y="6" width="14" height="3" fill="#5a7fd2"/><path d="M3,11.500 h4 M3,14 h4 M9,11.500 h4 M9,14 h4" stroke="#8a94b4" stroke-width="1.400"/><path d="M8,3 L13,0 L20,2 L19,8 L14,7 Z" fill="#e8c04a" stroke="#a68420" stroke-width="0.800"/><path d="M11,4 L16,3 L19,7 L14,8 Z" fill="#6aa84a"/></g>
<g transform="translate(696,72)" ><path d="M3,2 C1,3 1,6 3,7 L13,17 L15.500,14.500 L6,5 C6.500,3 5,1 3,2 Z" fill="#b8bcc8" stroke="#5a6078" stroke-width="0.900"/><path d="M17,1 L11,5 L13,8 L19,4 Z" fill="#8c92a4" stroke="#4a5068" stroke-width="0.800"/><path d="M12.500,6.500 L3,15.500 L5,17.500 L14,8.500 Z" fill="#d84a3a" stroke="#8a2a20" stroke-width="0.800"/></g>
<rect x="724.5" y="85" width="9" height="2" fill="#000"/><path d="M724,89 h10 l-5.0,6 Z" fill="#000"/>
<rect x="1588.5" y="85" width="9" height="2" fill="#000"/><path d="M1588,89 h10 l-5.0,6 Z" fill="#000"/>
<g transform="translate(834,72)" ><rect x="4.5" y="4.5" width="10" height="10" fill="#dbd8c9" stroke="#bfbcab"/><path d="M0,4.500 h19 M0,14.500 h19 M4.500,0 v19 M14.500,0 v19" stroke="#bfbcab" stroke-width="1.3" fill="none"/></g>
<g transform="translate(870,72)" ><path d="M1.500,0 v18" stroke="#bfbcab" stroke-width="1.8" fill="none"/><rect x="4.5" y="2.5" width="10" height="5" fill="#dbd8c9" stroke="#bfbcab"/><rect x="4.5" y="10.5" width="6" height="5" fill="#dbd8c9" stroke="#bfbcab"/><path d="M4,16.500 h10" stroke="#bfbcab" stroke-width="1" fill="none"/></g>
<g transform="translate(899,72)" ><path d="M7,0 v18" stroke="#bfbcab" stroke-width="1.3" fill="none"/><rect x="3.5" y="3.5" width="7" height="5" fill="#dbd8c9" stroke="#bfbcab"/><rect x="0.5" y="10.5" width="13" height="5" fill="#dbd8c9" stroke="#bfbcab"/></g>
<g transform="translate(926,72)" ><path d="M15.500,0 v18" stroke="#bfbcab" stroke-width="1.8" fill="none"/><rect x="2.5" y="2.5" width="10" height="5" fill="#dbd8c9" stroke="#bfbcab"/><rect x="6.5" y="10.5" width="6" height="5" fill="#dbd8c9" stroke="#bfbcab"/><path d="M2,16.500 h10" stroke="#bfbcab" stroke-width="1" fill="none"/></g>
<g transform="translate(960,72)" ><path d="M0,1.500 h17" stroke="#bfbcab" stroke-width="1.8" fill="none"/><rect x="2.5" y="4.5" width="5" height="10" fill="#dbd8c9" stroke="#bfbcab"/><rect x="9.5" y="4.5" width="5" height="6" fill="#dbd8c9" stroke="#bfbcab"/><path d="M15.500,5 v9" stroke="#bfbcab" stroke-width="1" fill="none"/></g>
<g transform="translate(988,72)" ><path d="M0,9 h17" stroke="#bfbcab" stroke-width="1.3" fill="none"/><rect x="2.5" y="5.5" width="4" height="7" fill="#dbd8c9" stroke="#bfbcab"/><rect x="8.5" y="2.5" width="5" height="13" fill="#dbd8c9" stroke="#bfbcab"/></g>
<g transform="translate(1016,72)" ><path d="M0,16.500 h17" stroke="#bfbcab" stroke-width="1.8" fill="none"/><rect x="2.5" y="4.5" width="5" height="10" fill="#dbd8c9" stroke="#bfbcab"/><rect x="9.5" y="8.5" width="5" height="6" fill="#dbd8c9" stroke="#bfbcab"/><path d="M15.500,4 v9" stroke="#bfbcab" stroke-width="1" fill="none"/></g>
<g transform="translate(1048,72)" ><rect x="0.5" y="1.5" width="18" height="5" fill="#dbd8c9" stroke="#bfbcab"/><rect x="0.500" y="8.500" width="18" height="9" fill="none" stroke="#bfbcab" stroke-dasharray="2,1.500"/><rect x="6.5" y="13.5" width="6" height="4" fill="#dbd8c9" stroke="#bfbcab"/><path d="M0,16 h5 M14,16 h5" stroke="#bfbcab" stroke-width="1.2" fill="none"/></g>
<g transform="translate(1076,72)" ><rect x="11.5" y="0.5" width="6" height="18" fill="#dbd8c9" stroke="#bfbcab"/><rect x="0.500" y="0.500" width="9" height="18" fill="none" stroke="#bfbcab" stroke-dasharray="2,1.500"/><rect x="1.5" y="6.5" width="5" height="6" fill="#dbd8c9" stroke="#bfbcab"/></g>
<g transform="translate(1104,72)" ><rect x="0.500" y="0.500" width="18" height="18" fill="none" stroke="#bfbcab" stroke-width="1.300" stroke-dasharray="4,2.500"/><rect x="6.5" y="6.5" width="6" height="6" fill="#dbd8c9" stroke="#bfbcab"/><path d="M9.500,2 v4 M9.500,13 v4 M2,9.500 h4 M13,9.500 h4" stroke="#bfbcab" stroke-width="1" fill="none"/></g>
<g transform="translate(1133,72)" ><rect x="4.5" y="4.5" width="10" height="10" fill="#dbd8c9" stroke="#bfbcab"/><path d="M0,4.500 h19 M0,14.500 h19 M4.500,0 v19 M14.500,0 v19" stroke="#bfbcab" stroke-width="1" fill="none"/><path d="M9.500,0 v3 M9.500,16 v3 M0,9.500 h3 M16,9.500 h3" stroke="#bfbcab" stroke-width="1.2" fill="none"/></g>
<g transform="translate(1166,76)" ><rect x="0.5" y="2.5" width="4" height="7" fill="#dbd8c9" stroke="#bfbcab"/><rect x="7.5" y="0.5" width="5" height="11" fill="#dbd8c9" stroke="#bfbcab"/><rect x="15.5" y="2.5" width="4" height="7" fill="#dbd8c9" stroke="#bfbcab"/><path d="M4.500,6 h3 M12.500,6 h3" stroke="#bfbcab" stroke-width="1" fill="none"/></g>
<g transform="translate(1194,72)" ><rect x="6.5" y="1.5" width="6" height="9" fill="#dbd8c9" stroke="#bfbcab"/><path d="M0,3.500 l4,2.500 l-4,2.500 M19,3.500 l-4,2.500 l4,2.500" stroke="#bfbcab" stroke-width="1.2" fill="none"/><path d="M0,15.500 h7 M4.500,13 l2.500,2.500 l-2.500,2.500 M19,15.500 h-7 M14.500,13 l-2.500,2.500 l2.500,2.500" stroke="#bfbcab" stroke-width="1.1" fill="none"/></g>
<g transform="translate(1223,72)" ><rect x="0.5" y="1.5" width="4" height="8" fill="#dbd8c9" stroke="#bfbcab"/><rect x="6.5" y="1.5" width="5" height="8" fill="#dbd8c9" stroke="#bfbcab"/><rect x="13.5" y="2.5" width="4" height="6" fill="#dbd8c9" stroke="#bfbcab"/><path d="M0,15.500 h7 M4.500,13 l2.500,2.500 l-2.500,2.500 M18,15.500 h-7 M13.500,13 l-2.500,2.500 l2.500,2.500" stroke="#bfbcab" stroke-width="1.1" fill="none"/></g>
<g transform="translate(1253,72)" ><rect x="3.5" y="0.5" width="6" height="10" fill="#dbd8c9" stroke="#bfbcab"/><rect x="9.5" y="2.5" width="4" height="6" fill="#dbd8c9" stroke="#bfbcab"/><path d="M0,15.500 h6 M3.500,13 l2.500,2.500 l-2.500,2.500 M15,15.500 h-6 M11.500,13 l-2.500,2.500 l2.500,2.500" stroke="#bfbcab" stroke-width="1.1" fill="none"/></g>
<g transform="translate(1289,72)" ><rect x="2.5" y="0.5" width="6" height="4" fill="#dbd8c9" stroke="#bfbcab"/><rect x="0.5" y="7.5" width="10" height="5" fill="#dbd8c9" stroke="#bfbcab"/><rect x="2.5" y="15.5" width="6" height="4" fill="#dbd8c9" stroke="#bfbcab"/><path d="M5.500,4.500 v3 M5.500,12.500 v3" stroke="#bfbcab" stroke-width="1" fill="none"/></g>
<g transform="translate(1313,72)" ><path d="M1,0 l3,3.500 l3,-3.500 M1,19 l3,-3.500 l3,3.500" stroke="#bfbcab" stroke-width="1.2" fill="none"/><rect x="0.5" y="6.5" width="8" height="6" fill="#dbd8c9" stroke="#bfbcab"/><path d="M14.500,0 v7 M12,3 l2.500,-2.500 l2.500,2.500 M14.500,19 v-7 M12,16 l2.500,2.500 l2.500,-2.500" stroke="#bfbcab" stroke-width="1.1" fill="none"/></g>
<g transform="translate(1341,72)" ><rect x="1.5" y="0.5" width="6" height="4" fill="#dbd8c9" stroke="#bfbcab"/><rect x="0.5" y="6.5" width="8" height="5" fill="#dbd8c9" stroke="#bfbcab"/><rect x="1.5" y="13.5" width="6" height="4" fill="#dbd8c9" stroke="#bfbcab"/><path d="M14.500,0 v7 M12,4.500 l2.500,2.500 l2.500,-2.500 M14.500,19 v-7 M12,14.500 l2.500,-2.500 l2.500,2.500" stroke="#bfbcab" stroke-width="1.1" fill="none"/></g>
<g transform="translate(1369,72)" ><rect x="2.5" y="3.5" width="6" height="5" fill="#dbd8c9" stroke="#bfbcab"/><rect x="0.5" y="8.5" width="10" height="6" fill="#dbd8c9" stroke="#bfbcab"/><path d="M14.500,0 v7 M12,4.500 l2.500,2.500 l2.500,-2.500 M14.500,19 v-7 M12,14.500 l2.500,-2.500 l2.500,2.500" stroke="#bfbcab" stroke-width="1.1" fill="none"/></g>
<g transform="translate(1402,71)" ><rect x="0.500" y="0.500" width="19" height="19" fill="#f6f5ee" stroke="#bfbcab" stroke-width="1.200"/><rect x="7.5" y="4.5" width="5" height="11" fill="#dbd8c9" stroke="#bfbcab"/><path d="M1,10 h6 M13,10 h6" stroke="#bfbcab" stroke-width="1.2" fill="none"/></g>
<g transform="translate(1430,71)" ><rect x="0.500" y="0.500" width="19" height="19" fill="#f6f5ee" stroke="#bfbcab" stroke-width="1.200"/><rect x="4.5" y="7.5" width="11" height="5" fill="#dbd8c9" stroke="#bfbcab"/><path d="M10,1 v6 M10,13 v6" stroke="#bfbcab" stroke-width="1.2" fill="none"/></g>
<g transform="translate(1465,72)" ><rect x="0.500" y="0.500" width="11" height="10" fill="#cbc8b8" stroke="#bfbcab"/><rect x="7.500" y="7.500" width="11" height="10" fill="#dbd8c9" stroke="#bfbcab"/></g>
<g transform="translate(1493,72)" ><rect x="7.500" y="7.500" width="11" height="10" fill="#dbd8c9" stroke="#bfbcab"/><rect x="0.500" y="0.500" width="11" height="10" fill="#cbc8b8" stroke="#bfbcab"/></g>
<g transform="translate(1526,72)" ><rect x="0.500" y="1.500" width="19" height="15" fill="#dbd8c9" stroke="#bfbcab"/><path d="M1,6.500 h18 M1,11.500 h18 M10,2 v14" stroke="#bfbcab" stroke-width="1" fill="none"/></g>
<g transform="translate(1560,71)" ><rect x="0.500" y="0.500" width="12" height="4.500" fill="#5f86d8" stroke="#1f3f8e"/><rect x="0.500" y="7.500" width="15" height="4.500" fill="#fff" stroke="#222"/><rect x="0.500" y="14.500" width="12" height="4.500" fill="#5f86d8" stroke="#1f3f8e"/><path d="M15,1.500 h3 v3.500 M18,9 v0 M15,16.500 h3 v-3.500" stroke="#1f3f8e" stroke-width="1.600" fill="none"/><path d="M18.500,8 v4" stroke="#1f3f8e" stroke-width="2"/></g>
<path d="M1317.5,177 V185" stroke="#9c9c9c" stroke-width="1" stroke-dasharray="1,1.500" fill="none"/><path d="M1324,189.0 H1332" stroke="#9c9c9c" stroke-width="1" stroke-dasharray="1,1.500" fill="none"/><path d="M1338.5,199 V718" stroke="#9c9c9c" stroke-width="1" stroke-dasharray="1,1.500" fill="none"/><path d="M1359.5,243 V277" stroke="#9c9c9c" stroke-width="1" stroke-dasharray="1,1.500" fill="none"/><path d="M1340,211.0 H1352" stroke="#9c9c9c" stroke-width="1" stroke-dasharray="1,1.500" fill="none"/><path d="M1344,233.0 H1355" stroke="#9c9c9c" stroke-width="1" stroke-dasharray="1,1.500" fill="none"/><path d="M1361,255.0 H1373" stroke="#9c9c9c" stroke-width="1" stroke-dasharray="1,1.500" fill="none"/><path d="M1361,277.0 H1373" stroke="#9c9c9c" stroke-width="1" stroke-dasharray="1,1.500" fill="none"/><path d="M1340,299.0 H1352" stroke="#9c9c9c" stroke-width="1" stroke-dasharray="1,1.500" fill="none"/><path d="M1340,321.0 H1352" stroke="#9c9c9c" stroke-width="1" stroke-dasharray="1,1.500" fill="none"/><path d="M1340,343.0 H1352" stroke="#9c9c9c" stroke-width="1" stroke-dasharray="1,1.500" fill="none"/><path d="M1340,365.0 H1352" stroke="#9c9c9c" stroke-width="1" stroke-dasharray="1,1.500" fill="none"/><path d="M1340,387.0 H1352" stroke="#9c9c9c" stroke-width="1" stroke-dasharray="1,1.500" fill="none"/><path d="M1340,409.0 H1352" stroke="#9c9c9c" stroke-width="1" stroke-dasharray="1,1.500" fill="none"/><path d="M1340,431.0 H1352" stroke="#9c9c9c" stroke-width="1" stroke-dasharray="1,1.500" fill="none"/><path d="M1340,453.0 H1352" stroke="#9c9c9c" stroke-width="1" stroke-dasharray="1,1.500" fill="none"/><path d="M1340,475.0 H1352" stroke="#9c9c9c" stroke-width="1" stroke-dasharray="1,1.500" fill="none"/><path d="M1340,497.0 H1352" stroke="#9c9c9c" stroke-width="1" stroke-dasharray="1,1.500" fill="none"/><path d="M1340,519.0 H1352" stroke="#9c9c9c" stroke-width="1" stroke-dasharray="1,1.500" fill="none"/><path d="M1340,541.0 H1352" stroke="#9c9c9c" stroke-width="1" stroke-dasharray="1,1.500" fill="none"/><path d="M1340,563.0 H1352" stroke="#9c9c9c" stroke-width="1" stroke-dasharray="1,1.500" fill="none"/><path d="M1340,585.0 H1352" stroke="#9c9c9c" stroke-width="1" stroke-dasharray="1,1.500" fill="none"/><path d="M1340,607.0 H1352" stroke="#9c9c9c" stroke-width="1" stroke-dasharray="1,1.500" fill="none"/><path d="M1340,629.0 H1352" stroke="#9c9c9c" stroke-width="1" stroke-dasharray="1,1.500" fill="none"/><path d="M1340,651.0 H1352" stroke="#9c9c9c" stroke-width="1" stroke-dasharray="1,1.500" fill="none"/><path d="M1340,673.0 H1352" stroke="#9c9c9c" stroke-width="1" stroke-dasharray="1,1.500" fill="none"/><path d="M1340,695.0 H1352" stroke="#9c9c9c" stroke-width="1" stroke-dasharray="1,1.500" fill="none"/><path d="M1340,717.0 H1352" stroke="#9c9c9c" stroke-width="1" stroke-dasharray="1,1.500" fill="none"/><rect x="1313.5" y="185.5" width="8" height="8" fill="#fff" stroke="#8c8c8c"/><path d="M1315.0,189.5 h5" stroke="#000" stroke-width="1.200"/><rect x="1334.5" y="229.5" width="8" height="8" fill="#fff" stroke="#8c8c8c"/><path d="M1336.0,233.5 h5" stroke="#000" stroke-width="1.200"/><g transform="translate(1316,159.0)" ><rect x="0.500" y="0.500" width="15" height="12.500" fill="#fcfdff" stroke="#52659a"/><rect x="1" y="1" width="14" height="3" fill="#4d74d2"/></g>
<g transform="translate(1319,165.5) scale(0.6)"><ellipse cx="6" cy="10" rx="3.700" ry="4" fill="none" stroke="url(#vl1)" stroke-width="4.600"/><ellipse cx="15.500" cy="10" rx="3.700" ry="4" fill="none" stroke="url(#vl2)" stroke-width="4.600"/><path d="M5.500,13.500 L16,6.500" stroke="#e2492a" stroke-width="4.400" stroke-linecap="round"/></g>
<g transform="translate(1337,181.0)" ><rect x="4.500" y="0.500" width="11.500" height="10.500" fill="#dbe6fb" stroke="#4a66b0"/><rect x="5" y="1" width="10.500" height="2.300" fill="#5b7fd6"/><text x="6.300" y="9.300" font-family="Liberation Sans,sans-serif" font-size="7" font-weight="700" fill="#1f4fc0">VB</text><rect x="0.500" y="4.500" width="3.500" height="8" fill="#b9c0d0" stroke="#6b748e" stroke-width="0.800"/><rect x="2.500" y="8.500" width="7" height="5.500" fill="#eef2fb" stroke="#4a66b0" stroke-width="0.900"/><path d="M4,10.500 h4 M4,12.300 h4" stroke="#4a74d0" stroke-width="0.900"/></g>
<g transform="translate(1358,204.0)" ><rect x="0.500" y="2.500" width="15" height="10" fill="#dfe8fa" stroke="#6a7cae"/><rect x="0.500" y="0.500" width="7" height="2.500" fill="#c9d4ee" stroke="#6a7cae" stroke-width="0.800"/><path d="M2.500,5.500 h5 M2.500,8 h4" stroke="#2f55b8" stroke-width="1.400"/><path d="M8,11.500 L12,6 L14.500,11.500 Z" fill="#4a74d0"/></g>
<g transform="translate(1358,225.5)" ><path d="M0.500,12.500 V2.500 L2,1 H6 L7.500,2.500 H12.500 V5" fill="#e9c35a" stroke="#9a7a22"/><path d="M0.500,12.500 L3.500,5.500 H15.500 L12.500,12.500 Z" fill="#f8db7d" stroke="#9a7a22"/></g>
<g transform="translate(1380,247.0)" ><path d="M4.500,0.500 H11.500 L14.500,3.500 V14.500 H4.500 Z" fill="#e3ebfa" stroke="#6a7cae"/><path d="M11.500,5 v1 M11.500,8 v1 M11.500,11 v1" stroke="#6a7cae" stroke-width="1.500"/><path d="M0.500,5.500 H3 L7,2 V13 L3,9.500 H0.500 Z" fill="#f3c64d" stroke="#a87a18" stroke-width="0.900"/><path d="M8.500,4.500 C10,6 10,9 8.500,10.500" stroke="#a87a18" stroke-width="1.100" fill="none"/></g>
<g transform="translate(1380,269.0)" ><path d="M4.500,0.500 H11.500 L14.500,3.500 V14.500 H4.500 Z" fill="#e3ebfa" stroke="#6a7cae"/><path d="M11.500,5 v1 M11.500,8 v1 M11.500,11 v1" stroke="#6a7cae" stroke-width="1.500"/><path d="M0.500,5.500 H3 L7,2 V13 L3,9.500 H0.500 Z" fill="#f3c64d" stroke="#a87a18" stroke-width="0.900"/><path d="M8.500,4.500 C10,6 10,9 8.500,10.500" stroke="#a87a18" stroke-width="1.100" fill="none"/></g>
<g transform="translate(1359,291.5)" ><rect x="0.500" y="0.500" width="14" height="13" fill="#fdfdfd" stroke="#8a8a8a"/><circle cx="9.500" cy="4" r="2" fill="#f3b5b0" stroke="#c94a46" stroke-width="1.100"/><path d="M1,13 L1,9.500 L5,5.500 L9.500,10.500 L11.500,8.500 L14,11 L14,13 Z" fill="#4da247"/><path d="M1,13 L5,7.500 L9,13 Z" fill="#8fcf82" opacity="0.700"/></g>
<g transform="translate(1359,313.5)" ><rect x="0.500" y="0.500" width="14" height="13" fill="#fdfdfd" stroke="#8a8a8a"/><circle cx="9.500" cy="4" r="2" fill="#f3b5b0" stroke="#c94a46" stroke-width="1.100"/><path d="M1,13 L1,9.500 L5,5.500 L9.500,10.500 L11.500,8.500 L14,11 L14,13 Z" fill="#4da247"/><path d="M1,13 L5,7.500 L9,13 Z" fill="#8fcf82" opacity="0.700"/></g>
<g transform="translate(1359,335.0)" ><path d="M1.500,0.500 H10.500 L13.500,3.500 V14.500 H1.500 Z" fill="#d7e5fb" stroke="#5972b8"/><path d="M10.500,0.500 V3.500 H13.500" fill="#fff" stroke="#5972b8" stroke-width="0.800"/><text x="2.300" y="7.500" font-family="Liberation Sans,sans-serif" font-size="7.500" font-weight="700" fill="#2456c8">V</text><text x="6.500" y="9.500" font-family="Liberation Sans,sans-serif" font-size="7.500" font-weight="700" fill="#2456c8">B</text><path d="M3.500,11.500 h8" stroke="#9fb7e8" stroke-width="1.300"/></g>
<g transform="translate(1359,357.0)" ><rect x="0.500" y="0.500" width="15" height="14" fill="#e9e7d6" stroke="#7a7f9e"/><rect x="1" y="1" width="14" height="3.500" fill="#5b7fd6"/><rect x="7.500" y="6" width="5.500" height="2.500" fill="#f7f7f2" stroke="#8c94b4" stroke-width="0.800"/><rect x="7.500" y="10" width="5.500" height="2.500" fill="#f7f7f2" stroke="#8c94b4" stroke-width="0.800"/><path d="M3,7.300 h3 M3,11.300 h3" stroke="#6a7090" stroke-width="1.200"/></g>
<g transform="translate(1359,379.0)" ><rect x="0.500" y="0.500" width="15" height="14" fill="#e9e7d6" stroke="#7a7f9e"/><rect x="1" y="1" width="14" height="3.500" fill="#5b7fd6"/><rect x="7.500" y="6" width="5.500" height="2.500" fill="#f7f7f2" stroke="#8c94b4" stroke-width="0.800"/><rect x="7.500" y="10" width="5.500" height="2.500" fill="#f7f7f2" stroke="#8c94b4" stroke-width="0.800"/><path d="M3,7.300 h3 M3,11.300 h3" stroke="#6a7090" stroke-width="1.200"/></g>
<g transform="translate(1359,401.0)" ><rect x="0.500" y="0.500" width="15" height="14" fill="#e9e7d6" stroke="#7a7f9e"/><rect x="1" y="1" width="14" height="3.500" fill="#5b7fd6"/><rect x="7.500" y="6" width="5.500" height="2.500" fill="#f7f7f2" stroke="#8c94b4" stroke-width="0.800"/><rect x="7.500" y="10" width="5.500" height="2.500" fill="#f7f7f2" stroke="#8c94b4" stroke-width="0.800"/><path d="M3,7.300 h3 M3,11.300 h3" stroke="#6a7090" stroke-width="1.200"/></g>
<g transform="translate(1359,423.5)" ><rect x="0.500" y="0.500" width="14" height="13" fill="#fdfdfd" stroke="#8a8a8a"/><circle cx="9.500" cy="4" r="2" fill="#f3b5b0" stroke="#c94a46" stroke-width="1.100"/><path d="M1,13 L1,9.500 L5,5.500 L9.500,10.500 L11.500,8.500 L14,11 L14,13 Z" fill="#4da247"/><path d="M1,13 L5,7.500 L9,13 Z" fill="#8fcf82" opacity="0.700"/></g>
<g transform="translate(1359,445.5)" ><rect x="0.500" y="0.500" width="14" height="13" fill="#fdfdfd" stroke="#8a8a8a"/><circle cx="9.500" cy="4" r="2" fill="#f3b5b0" stroke="#c94a46" stroke-width="1.100"/><path d="M1,13 L1,9.500 L5,5.500 L9.500,10.500 L11.500,8.500 L14,11 L14,13 Z" fill="#4da247"/><path d="M1,13 L5,7.500 L9,13 Z" fill="#8fcf82" opacity="0.700"/></g>
<g transform="translate(1359,467.5)" ><rect x="0.500" y="0.500" width="14" height="13" fill="#fdfdfd" stroke="#8a8a8a"/><circle cx="9.500" cy="4" r="2" fill="#f3b5b0" stroke="#c94a46" stroke-width="1.100"/><path d="M1,13 L1,9.500 L5,5.500 L9.500,10.500 L11.500,8.500 L14,11 L14,13 Z" fill="#4da247"/><path d="M1,13 L5,7.500 L9,13 Z" fill="#8fcf82" opacity="0.700"/></g>
<g transform="translate(1359,489.5)" ><rect x="0.500" y="0.500" width="14" height="13" fill="#fdfdfd" stroke="#8a8a8a"/><circle cx="9.500" cy="4" r="2" fill="#f3b5b0" stroke="#c94a46" stroke-width="1.100"/><path d="M1,13 L1,9.500 L5,5.500 L9.500,10.500 L11.500,8.500 L14,11 L14,13 Z" fill="#4da247"/><path d="M1,13 L5,7.500 L9,13 Z" fill="#8fcf82" opacity="0.700"/></g>
<g transform="translate(1359,511.5)" ><rect x="0.500" y="0.500" width="14" height="13" fill="#fdfdfd" stroke="#8a8a8a"/><circle cx="9.500" cy="4" r="2" fill="#f3b5b0" stroke="#c94a46" stroke-width="1.100"/><path d="M1,13 L1,9.500 L5,5.500 L9.500,10.500 L11.500,8.500 L14,11 L14,13 Z" fill="#4da247"/><path d="M1,13 L5,7.500 L9,13 Z" fill="#8fcf82" opacity="0.700"/></g>
<g transform="translate(1359,533.5)" ><rect x="0.500" y="0.500" width="14" height="13" fill="#fdfdfd" stroke="#8a8a8a"/><circle cx="9.500" cy="4" r="2" fill="#f3b5b0" stroke="#c94a46" stroke-width="1.100"/><path d="M1,13 L1,9.500 L5,5.500 L9.500,10.500 L11.500,8.500 L14,11 L14,13 Z" fill="#4da247"/><path d="M1,13 L5,7.500 L9,13 Z" fill="#8fcf82" opacity="0.700"/></g>
<g transform="translate(1359,555.5)" ><rect x="0.500" y="0.500" width="14" height="13" fill="#fdfdfd" stroke="#8a8a8a"/><circle cx="9.500" cy="4" r="2" fill="#f3b5b0" stroke="#c94a46" stroke-width="1.100"/><path d="M1,13 L1,9.500 L5,5.500 L9.500,10.500 L11.500,8.500 L14,11 L14,13 Z" fill="#4da247"/><path d="M1,13 L5,7.500 L9,13 Z" fill="#8fcf82" opacity="0.700"/></g>
<g transform="translate(1359,577.5)" ><rect x="0.500" y="0.500" width="14" height="13" fill="#fdfdfd" stroke="#8a8a8a"/><circle cx="9.500" cy="4" r="2" fill="#f3b5b0" stroke="#c94a46" stroke-width="1.100"/><path d="M1,13 L1,9.500 L5,5.500 L9.500,10.500 L11.500,8.500 L14,11 L14,13 Z" fill="#4da247"/><path d="M1,13 L5,7.500 L9,13 Z" fill="#8fcf82" opacity="0.700"/></g>
<g transform="translate(1359,599.5)" ><rect x="0.500" y="0.500" width="14" height="13" fill="#fdfdfd" stroke="#8a8a8a"/><circle cx="9.500" cy="4" r="2" fill="#f3b5b0" stroke="#c94a46" stroke-width="1.100"/><path d="M1,13 L1,9.500 L5,5.500 L9.500,10.500 L11.500,8.500 L14,11 L14,13 Z" fill="#4da247"/><path d="M1,13 L5,7.500 L9,13 Z" fill="#8fcf82" opacity="0.700"/></g>
<g transform="translate(1359,621.0)" ><path d="M1.500,0.500 H10.500 L13.500,3.500 V14.500 H1.500 Z" fill="#d7e5fb" stroke="#5972b8"/><path d="M10.500,0.500 V3.500 H13.500" fill="#fff" stroke="#5972b8" stroke-width="0.800"/><text x="2.300" y="7.500" font-family="Liberation Sans,sans-serif" font-size="7.500" font-weight="700" fill="#2456c8">V</text><text x="6.500" y="9.500" font-family="Liberation Sans,sans-serif" font-size="7.500" font-weight="700" fill="#2456c8">B</text><path d="M3.500,11.500 h8" stroke="#9fb7e8" stroke-width="1.300"/></g>
<g transform="translate(1357,643.0)" ><path d="M3.500,0.500 H11.500 L14.500,3.500 V14.500 H3.500 Z" fill="#e6eefb" stroke="#5b6e9e"/><path d="M7,5.500 h5 M7,8 h5 M7,10.500 h5" stroke="#7f96c8" stroke-width="1"/><rect x="0.500" y="6.500" width="5" height="5" fill="#fff" stroke="#b23a3a" stroke-width="1.100"/><rect x="3.500" y="3.500" width="5" height="5" fill="none" stroke="#b23a3a" stroke-width="1.100"/></g>
<g transform="translate(1359,665.0)" ><path d="M0.500,0.500 H10.500 L13.500,3.500 V14.500 H0.500 Z" fill="#eef2fb" stroke="#5b6e9e"/><path d="M10.500,0.500 V3.500 H13.500" fill="#fff" stroke="#5b6e9e" stroke-width="0.800"/><g fill="#6d82b4"><rect x="2.500" y="3.500" width="2.500" height="2.800"/><rect x="6" y="3.500" width="2.500" height="2.800"/><rect x="2.500" y="7.200" width="2.500" height="2.800"/><rect x="6" y="7.200" width="2.500" height="2.800"/><rect x="9.500" y="7.200" width="2.500" height="2.800"/><rect x="2.500" y="10.900" width="2.500" height="2.800"/><rect x="6" y="10.900" width="2.500" height="2.800"/><rect x="9.500" y="10.900" width="2.500" height="2.800"/></g></g>
<g transform="translate(1359,687.5)" ><rect x="0.500" y="0.500" width="14" height="13" fill="#fdfdfd" stroke="#8a8a8a"/><circle cx="9.500" cy="4" r="2" fill="#f3b5b0" stroke="#c94a46" stroke-width="1.100"/><path d="M1,13 L1,9.500 L5,5.500 L9.500,10.500 L11.500,8.500 L14,11 L14,13 Z" fill="#4da247"/><path d="M1,13 L5,7.500 L9,13 Z" fill="#8fcf82" opacity="0.700"/></g>
<g transform="translate(1359,709.0)" ><path d="M0.500,0.500 H10.500 L13.500,3.500 V14.500 H0.500 Z" fill="#eef2fb" stroke="#5b6e9e"/><path d="M10.500,0.500 V3.500 H13.500" fill="#fff" stroke="#5b6e9e" stroke-width="0.800"/><g fill="#6d82b4"><rect x="2.500" y="3.500" width="2.500" height="2.800"/><rect x="6" y="3.500" width="2.500" height="2.800"/><rect x="2.500" y="7.200" width="2.500" height="2.800"/><rect x="6" y="7.200" width="2.500" height="2.800"/><rect x="9.500" y="7.200" width="2.500" height="2.800"/><rect x="2.500" y="10.900" width="2.500" height="2.800"/><rect x="6" y="10.900" width="2.500" height="2.800"/><rect x="9.500" y="10.900" width="2.500" height="2.800"/></g></g>
<g transform="translate(5,105)" ><path d="M1,1 L13,14" stroke="#c8382c" stroke-width="2.200"/><path d="M1,1 L6,6" stroke="#555" stroke-width="2.600"/><path d="M13,1 C10,1 9,4 10,5.500 L2,13.500 L4,15 L11.500,7 C14,8 16,6 15.500,3.500 L13.500,5.500 L12,4 Z" fill="#aeb4c4" stroke="#5a6078" stroke-width="0.800"/></g>
<path d="M1259,108 h11 l-5.5,6 Z" fill="#000"/>
<path d="M1281.500,104.500 l11,12 M1292.500,104.500 l-11,12" stroke="#000" stroke-width="2.200" fill="none"/><path d="M1531.0,110 h13 l-6.500,6.500 Z" fill="#d9e6ff"/><g stroke="#d9e6ff" fill="none"><path d="M1557.0,104.5 h6.500 v9 h-6.500 Z" stroke-width="1.300"/><path d="M1562.5,104.5 v9" stroke-width="2.200"/><path d="M1554.5,113.7 h11" stroke-width="1.400"/><path d="M1560.0,114 v5.500" stroke-width="1.400"/></g><path d="M1578.5,105.5 l12.500,12.500 M1591.0,105.5 l-12.500,12.500" stroke="#d9e6ff" stroke-width="1.900" fill="none"/>
<path d="M1531.0,747 h13 l-6.500,6.500 Z" fill="#d9e6ff"/><g stroke="#d9e6ff" fill="none"><path d="M1557.0,741.5 h6.500 v9 h-6.500 Z" stroke-width="1.300"/><path d="M1562.5,741.5 v9" stroke-width="2.200"/><path d="M1554.5,750.7 h11" stroke-width="1.400"/><path d="M1560.0,751 v5.500" stroke-width="1.400"/></g><path d="M1578.5,742.5 l12.500,12.500 M1591.0,742.5 l-12.500,12.500" stroke="#d9e6ff" stroke-width="1.900" fill="none"/>
<path d="M1231.0,913 h13 l-6.500,6.500 Z" fill="#d9e6ff"/><g stroke="#d9e6ff" fill="none"><path d="M1257.0,907.5 h6.500 v9 h-6.500 Z" stroke-width="1.300"/><path d="M1262.5,907.5 v9" stroke-width="2.200"/><path d="M1254.5,916.7 h11" stroke-width="1.400"/><path d="M1260.0,917 v5.500" stroke-width="1.400"/></g><path d="M1278.5,908.5 l12.500,12.500 M1291.0,908.5 l-12.500,12.500" stroke="#d9e6ff" stroke-width="1.900" fill="none"/>
<g transform="translate(61,154)" ><rect x="0.500" y="0.500" width="17" height="17" fill="#1a52d4" stroke="#a9c4f6"/><rect x="1.500" y="1.500" width="4.500" height="3.500" fill="#1844c0"/><rect x="1.500" y="6" width="5" height="7.500" fill="#b32c1c"/><rect x="3" y="8.500" width="2" height="2.500" fill="#f0a890"/><rect x="7.800" y="1.800" width="7.500" height="8" fill="#f7c234" stroke="#9c8a1c" stroke-width="1.200"/><rect x="8" y="11.500" width="6" height="4.500" fill="#8ea6e2"/><rect x="1.500" y="14.500" width="5" height="2" fill="#2a3a8a"/><path d="M15.800,11 v5.500" stroke="#dfe8fb" stroke-width="1"/></g>
<rect x="861" y="169" width="8" height="2.500" fill="#000"/><rect x="881.500" y="156.500" width="12" height="12" fill="none" stroke="#000" stroke-width="1.500"/><path d="M881,157.200 h13" stroke="#000" stroke-width="2.400"/><path d="M904.500,156.500 l11,12 M915.500,156.500 l-11,12" stroke="#000" stroke-width="2.400" fill="none"/><g transform="translate(57,834)" ><rect x="0.500" y="3.500" width="11" height="11" fill="#fff" stroke="#8a8fa8"/><rect x="1.500" y="0.500" width="5" height="3" fill="#fff" stroke="#8a8fa8" stroke-width="0.800"/><rect x="1" y="7.500" width="10.500" height="3" fill="#6b7fd8"/><path d="M2.500,5.500 h5 M2.500,12.500 h6" stroke="#333" stroke-width="1.200"/><path d="M3,9 h5" stroke="#fff" stroke-width="1"/></g>
<g transform="translate(190,833.5)" ><circle cx="8" cy="9.500" r="6.500" fill="#fdfdff" stroke="#6468b4" stroke-width="2.200"/><rect x="6.500" y="0" width="3" height="2.500" fill="#6468b4"/><path d="M2.500,3 l1.500,1.500 M13.500,3 l-1.500,1.500" stroke="#6468b4" stroke-width="1.500"/><path d="M8,9.500 L10.500,6.500" stroke="#222" stroke-width="1.200"/><g fill="#555"><circle cx="8" cy="5" r="0.700"/><circle cx="8" cy="14" r="0.700"/><circle cx="3.500" cy="9.500" r="0.700"/><circle cx="12.500" cy="9.500" r="0.700"/></g></g>
<g transform="translate(277,833.5)" ><circle cx="8" cy="9.500" r="6.500" fill="#fdfdff" stroke="#6468b4" stroke-width="2.200"/><rect x="6.500" y="0" width="3" height="2.500" fill="#6468b4"/><path d="M2.500,3 l1.500,1.500 M13.500,3 l-1.500,1.500" stroke="#6468b4" stroke-width="1.500"/><path d="M8,9.500 L10.500,6.500" stroke="#222" stroke-width="1.200"/><g fill="#555"><circle cx="8" cy="5" r="0.700"/><circle cx="8" cy="14" r="0.700"/><circle cx="3.500" cy="9.500" r="0.700"/><circle cx="12.500" cy="9.500" r="0.700"/></g></g>
<g transform="translate(1314,128)" ><rect x="0.500" y="0.500" width="10" height="9" fill="#e3d9b8" stroke="#a69f8a"/><rect x="3.500" y="3.500" width="11" height="9" fill="#e4e2d6" stroke="#a09c8c"/><rect x="5.500" y="8.500" width="14" height="10" fill="#dfe3ee" stroke="#7b849c"/><rect x="7.500" y="11" width="4" height="4" fill="#56688e"/><path d="M13,12 h5 M13,15 h5" stroke="#8b93a8" stroke-width="1.400"/></g>
<g transform="translate(1348,128)" ><path d="M0.500,0.500 H8 L10.500,3 V12 H0.500 Z" fill="#fff" stroke="#9a9a9a" stroke-dasharray="1.500,1"/><path d="M9.500,3.500 H15 L18.500,7 V15 H9.500 Z" fill="#e9dcae" stroke="#a08a4a"/><path d="M3.500,7.500 H11 L14,10.500 V18.500 H3.500 Z" fill="#cfdcf6" stroke="#5168a8"/><path d="M5.500,12 h6 M5.500,14.500 h6 M5.500,16.500 h6" stroke="#5f7fca" stroke-width="1"/></g>
<g transform="translate(1376,129)" ><rect x="0.500" y="0.500" width="19" height="17.500" fill="#fdfdfd" stroke="#5b6ea6"/><rect x="1" y="1" width="18" height="3.500" fill="#5f86dc"/><path d="M6,10 C6,7 9,5.500 12,7 M13,5 l0.500,3.500 l-3.500,0.300" fill="none" stroke="#3d9a33" stroke-width="2"/><path d="M14.500,11.500 C14.500,14.500 11.500,16 8.500,14.500 M7.500,16.500 l-0.500,-3.500 l3.500,-0.300" fill="none" stroke="#58b848" stroke-width="2"/></g>
<g transform="translate(1411,130)" ><rect x="0.500" y="0.500" width="17" height="15" fill="#fff" stroke="#8f8b7c" stroke-width="1.800"/><path d="M5,4 h5 M7.500,6.500 h6 M7.500,9 h5 M5,11.500 h5" stroke="#2f57c8" stroke-width="1.500"/></g>
<g transform="translate(1438,129)" ><rect x="0.500" y="0.500" width="18" height="16" fill="#eceade" stroke="#7d86a6"/><rect x="1" y="1" width="17" height="3.500" fill="#5f86dc"/><rect x="8.500" y="6.500" width="7" height="3" fill="#d5d9e4" stroke="#8c94ac" stroke-width="0.800"/><rect x="8.500" y="11.500" width="7" height="3" fill="#d5d9e4" stroke="#8c94ac" stroke-width="0.800"/><path d="M3,8 h4 M3,13 h4" stroke="#8c94ac" stroke-width="1.200"/></g>
<g transform="translate(1466,128)" ><rect x="6.500" y="0.500" width="7" height="5" rx="1" fill="#8fb0ee" stroke="#3f5fae"/><rect x="0.500" y="10.500" width="7" height="5" rx="1" fill="#8fb0ee" stroke="#3f5fae"/><path d="M10,6 L4,10 M10,6 L13,9" stroke="#3f5fae" stroke-width="1.200"/><circle cx="12" cy="11" r="4.200" fill="#eaf1ff" stroke="#8e96ac" stroke-width="1.600"/><path d="M15,14 L19,18.500" stroke="#c4922e" stroke-width="2.400"/></g>
<path d="M1587.5,776 h7 l-3.5,4 Z" fill="#000"/>
<g transform="translate(1311,797)" ><rect x="0.500" y="0.500" width="6" height="6" rx="1" fill="#fff" stroke="#556"/><path d="M2,3.500 h3 M3.500,2 v3" stroke="#000" stroke-width="1.300"/><rect x="0.500" y="9.500" width="6" height="6" rx="1" fill="#fff" stroke="#556"/><path d="M2,12.500 h3 M3.500,11 v3" stroke="#000" stroke-width="1.300"/><path d="M9,2 h4 M9,11.500 h4" stroke="#333" stroke-width="1.400"/><path d="M14,2 h3 M9,5 h3 M13,5 h4 M9,7.500 h3 M13,7.500 h4 M14,11.500 h3 M9,14.500 h3 M13,14.500 h4" stroke="#7f92c4" stroke-width="1.200"/></g>
<text x="1334" y="806" font-family="Liberation Serif,serif" font-size="11" font-weight="700" fill="#2d4fa8">A</text><text x="1334" y="815.500" font-family="Liberation Serif,serif" font-size="11" font-weight="700" fill="#b83a3a">Z</text><path d="M1346.500,797.500 v12" stroke="#000" stroke-width="1.300" fill="none"/><path d="M1343.700,808 l2.800,4.500 l2.800,-4.500 Z" fill="#000"/><g transform="translate(1365,800)" ><rect x="0.500" y="0.500" width="12" height="9.500" fill="#fff" stroke="#222" stroke-width="1.200"/><path d="M2.500,3 h1.500 M5,3 h6 M2.500,5.300 h1.500 M5,5.300 h6 M2.500,7.600 h1.500 M5,7.600 h6" stroke="#223a8a" stroke-width="1"/></g>
<g transform="translate(1388,798)" ><path d="M4,0 L10,0 L6.500,5 L9,5 L1.500,13 L4,7 L1,7 Z" fill="#f2b23a" stroke="#d07a1e" stroke-width="0.800"/></g>
<g transform="translate(1415,797)" ><rect x="0.500" y="0.500" width="16" height="14" fill="#e2dfd2" stroke="#b5b2a3" stroke-width="1.400"/><rect x="3.500" y="5.500" width="10" height="6" fill="#eceade" stroke="#b5b2a3"/><path d="M5.500,8.500 h6" stroke="#b5b2a3" stroke-width="1.400"/></g>
<rect x="1309.500" y="918.500" width="8" height="8" fill="#fff" stroke="#333"/><path d="M1311.500,922.500 h4" stroke="#000" stroke-width="1.200"/><path d="M1580.5,833.0 L1586.5,827.0 L1592.5,833.0 Z" fill="#000"/><path d="M1580.5,993.0 L1586.5,999.0 L1592.5,993.0 Z" fill="#000"/><path d="M319,939 h10 l-5.0,5.5 Z" fill="#000"/>
<g transform="translate(343,931)" ><path d="M2.500,0.500 H10 L13.500,4 V13 H2.500 Z" fill="#d3d0c1" stroke="#c2bfae"/><path d="M5.500,8 h6 v4 h3 l-6,7 l-6,-7 h3 Z" fill="#cfccbc" stroke="#c2bfae" stroke-width="0.600" opacity="0.900"/></g>
<g transform="translate(384,931)" ><path d="M0.500,0.500 H8 L11.500,4 V14.500 H0.500 Z" fill="#e6eefb" stroke="#4a64a8"/><path d="M2.500,5 h6 M2.500,7.500 h6" stroke="#4f9a42" stroke-width="1.400"/><path d="M2.500,10 h6" stroke="#7f96c8" stroke-width="1.200"/></g>
<g transform="translate(376,938)" ><path d="M0,6.500 L8,0 V4 H15 V9 H8 V13 Z" fill="#58b04a" stroke="#2f7a28" stroke-width="0.900"/></g>
<g transform="translate(405,931)" ><path d="M0.500,0.500 H8 L11.500,4 V14.500 H0.500 Z" fill="#e6eefb" stroke="#4a64a8"/><path d="M2.500,5 h6 M2.500,7.500 h6" stroke="#4f9a42" stroke-width="1.400"/><path d="M2.500,10 h6" stroke="#7f96c8" stroke-width="1.200"/></g>
<g transform="translate(409,938)" ><path d="M15,6.500 L7,0 V4 H0 V9 H7 V13 Z" fill="#58b04a" stroke="#2f7a28" stroke-width="0.900"/></g>
<g transform="translate(437,933)" ><path d="M0,1.500 h17 M0,5.500 h17 M0,9.500 h11" stroke="#8f8f94" stroke-width="2.400"/><path d="M11,6.500 L20,17.500 M20,6.500 L11,17.500" stroke="#e0392b" stroke-width="3"/></g>
<g transform="translate(472,932)" ><rect x="1" y="1" width="18" height="15" fill="#fff" stroke="#3f62b8" stroke-width="2"/><rect x="0" y="0" width="20" height="3.500" fill="#6f92e2"/><path d="M15,6 v5 h-8" fill="none" stroke="#000" stroke-width="1.800"/><path d="M9.500,8 L5.500,11 L9.500,14 Z" fill="#000"/></g>
<path d="M1282,971.0 L1288,965.0 L1294,971.0 Z" fill="#aca899"/><path d="M1282,1065.0 L1288,1071.0 L1294,1065.0 Z" fill="#aca899"/><path d="M42.0,1084.5 L36.0,1090.5 L42.0,1096.5 Z" fill="#000"/><path d="M1263.0,1084.5 L1269.0,1090.5 L1263.0,1096.5 Z" fill="#000"/><g transform="translate(30,1109)" ><rect x="0.500" y="2.500" width="11" height="13" fill="#f4f0df" stroke="#8a867a"/><rect x="3" y="0.500" width="6" height="3.500" fill="#c9c5b5" stroke="#8a867a" stroke-width="0.800"/><circle cx="10" cy="11.500" r="4.800" fill="#e8483a" stroke="#b22a20" stroke-width="0.800"/><path d="M7.800,9.300 l4.400,4.400 M12.200,9.300 l-4.400,4.400" stroke="#fff" stroke-width="1.500"/></g>
<g transform="translate(120,1113)" ><rect x="0.500" y="0.500" width="11.500" height="10.500" fill="#fff" stroke="#3f58a8"/><rect x="1" y="1" width="10.500" height="2.500" fill="#5f86dc"/><path d="M3,5.500 h6.500 M3,7.500 h6.500 M3,9.200 h6.500" stroke="#42599c" stroke-width="1"/></g>
<g transform="translate(193,1109)" ><rect x="0.500" y="0.500" width="13" height="10" fill="#fff" stroke="#3f58a8"/><rect x="1" y="1" width="12" height="2.500" fill="#5f86dc"/><path d="M2.500,5.500 h9 M2.500,7.800 h9" stroke="#7a90c8" stroke-width="1"/><path d="M5,10 h3 v2 h2 v-2 h3 v6 h-3 v-2 h-2 v2 h-3 Z" fill="#222"/></g>
<g transform="translate(1326,1138)" ><rect x="3.500" y="3.500" width="10" height="10" fill="none" stroke="#444" stroke-dasharray="1.500,1.500"/><path d="M0,3.500 h7 M3.500,0 v7" stroke="#333" stroke-width="1.200"/></g>
<g transform="translate(1450,1137)" ><rect x="5.500" y="5.500" width="9" height="9" fill="none" stroke="#444" stroke-dasharray="1.500,1.500"/><path d="M5,2 h10 M5,0 v4 M15,0 v4 M2,5 v10 M0,15 h4" stroke="#333" stroke-width="1.100"/><path d="M0,9 l2,3 l2,-3" stroke="#333" fill="none"/></g>
<g transform="translate(4,1169)" ><path d="M3,3 C5,1 7,1 9,2.500 L7.500,9 C5.500,7.500 3.500,7.500 1.500,9.500 Z" fill="#e2522f"/><path d="M10,3 C12,4.500 14,4.500 16.500,2.500 L15,9 C12.500,11 10.500,10.500 8.500,9.500 Z" fill="#69b545"/><path d="M1.200,10.500 C3.200,8.500 5.200,8.500 7.200,10 L5.700,16.500 C3.700,15 1.700,15 -0.300,17 Z" fill="#3c78d8"/><path d="M8.200,10.500 C10.200,12 12.200,12 14.700,10 L13.200,16.500 C10.700,18.500 8.700,18 6.700,17 Z" fill="#f2c02e"/></g>
<g transform="translate(94,1172) scale(0.95)"><ellipse cx="6" cy="10" rx="3.700" ry="4" fill="none" stroke="url(#vl1)" stroke-width="4.600"/><ellipse cx="15.500" cy="10" rx="3.700" ry="4" fill="none" stroke="url(#vl2)" stroke-width="4.600"/><path d="M5.500,13.500 L16,6.500" stroke="#e2492a" stroke-width="4.400" stroke-linecap="round"/></g>
<g transform="translate(256,1171)" ><path d="M5.500,0.500 H15 L19.500,5 V18.500 H5.500 Z" fill="#f2f6fd" stroke="#6a80b8"/><path d="M8,8 h9 M8,11 h9 M8,14 h9" stroke="#9fb2dc" stroke-width="1.200"/><rect x="0.500" y="2.500" width="11" height="10" fill="#2f5fc4" stroke="#1c3c8c"/><text x="1.500" y="11" font-family="Liberation Sans,sans-serif" font-size="9" font-weight="700" fill="#fff">W</text></g>
</svg>
</body>
</html>
